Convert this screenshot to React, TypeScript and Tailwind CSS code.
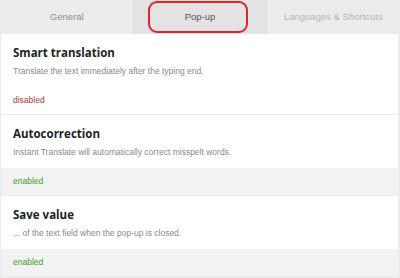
import React from 'react'

const tabs = [
  { label: 'General', active: false, cls: 'text-[#8c8c8c]' },
  { label: 'Pop-up', active: true, cls: 'text-[#555555]' },
  { label: 'Languages & Shortcuts', active: false, cls: 'text-[#b4b4b4]' },
]

const options = [
  { title: 'Smart translation', desc: 'Translate the text immediately after the typing end.', on: false },
  { title: 'Autocorrection', desc: 'Instant Translate will automatically correct misspelt words.', on: true },
  { title: 'Save value', desc: '... of the text field when the pop-up is closed.', on: true },
]

const small = { fontFamily: '"Liberation Sans", Arial, sans-serif' }

export default function App() {
  return (
    <div className="w-[400px] h-[278px] bg-[#ececec] overflow-hidden" style={{ fontFamily: '"Open Sans", "Liberation Sans", sans-serif' }}>
      {/* tabs */}
      <div className="relative grid grid-cols-3 h-[34px]">
        {tabs.map(t => (
          <div key={t.label} className={`flex items-center justify-center text-[9.5px] ${t.active ? 'bg-[#e3e3e3]' : 'bg-[#ececec]'} ${t.cls}`} style={small}>
            {t.label}
          </div>
        ))}
        {/* annotation */}
        <div className="absolute left-[148px] top-px w-[100px] h-[32px] border-2 border-[#e3232b] rounded-[9px]" />
      </div>

      {/* options */}
      <div className="ml-px mr-[2px] bg-white">
        {options.map((o, i) => (
          <div key={o.title} className={i > 0 ? 'border-t border-[#ececec]' : ''}>
            <div className="px-3 pt-[10px] h-[53px]">
              <p className="text-[11.5px] font-bold leading-[17px] text-[#222]">{o.title}</p>
              <p className="mt-[4px] text-[8.5px] text-[#8a8a8a]" style={small}>{o.desc}</p>
            </div>
            <div className={`h-[27px] px-3 flex items-center text-[8.5px] ${o.on ? 'bg-[#f2f2f2] text-[#3f9d1f]' : 'bg-white text-[#b2343a]'}`} style={small}>
              {o.on ? 'enabled' : 'disabled'}
            </div>
          </div>
        ))}
      </div>
    </div>
  )
}
